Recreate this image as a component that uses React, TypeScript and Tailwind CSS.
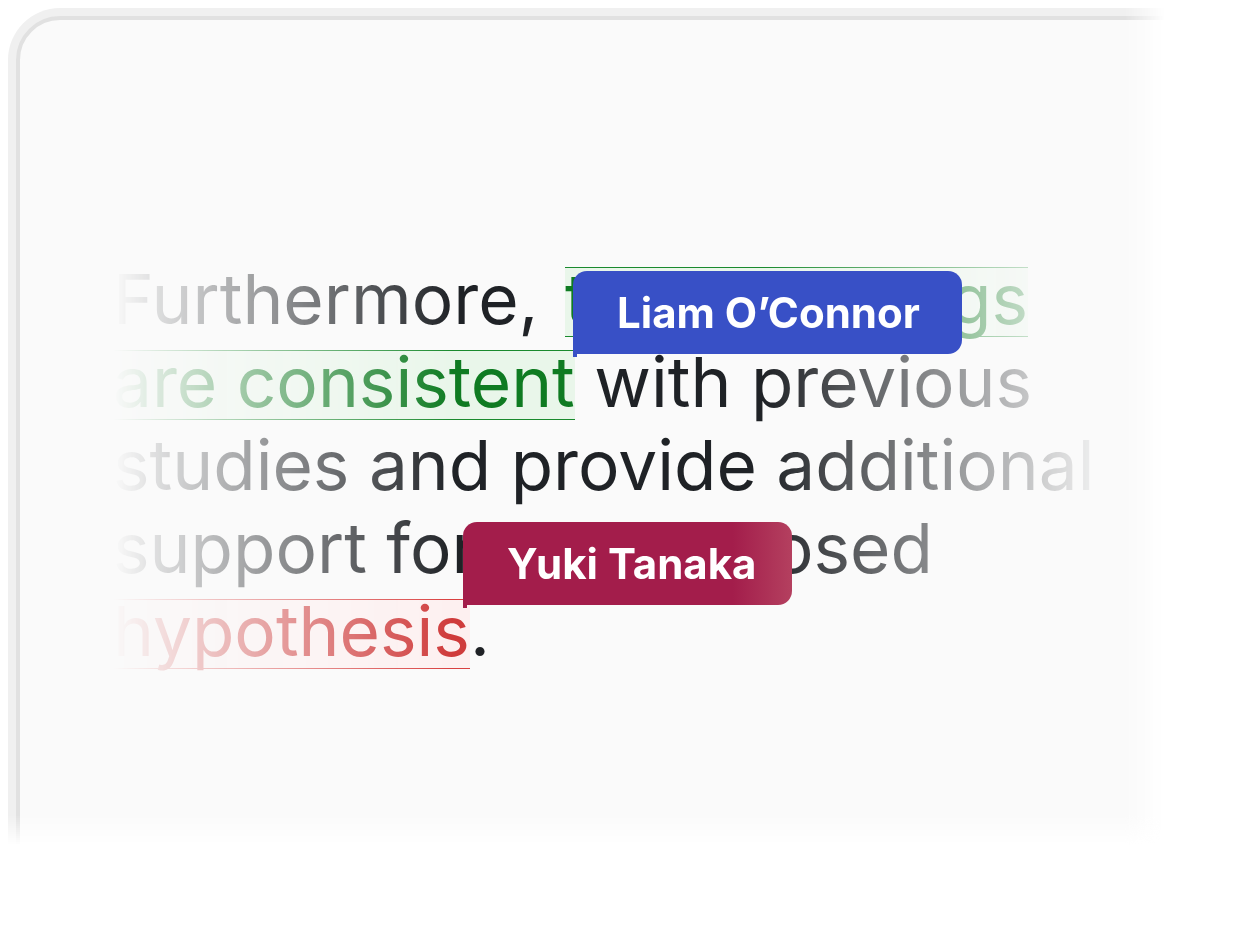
import React from "react";

function Hl({ kind, className = "", children }: { kind: "green" | "red"; className?: string; children: React.ReactNode }) {
  const box =
    kind === "green"
      ? "border-[#1a8a2e] bg-[#e9f6ea]"
      : "border-[#d94040] bg-[#fdf0f0]";
  const txt = kind === "green" ? "text-[#0f7b22]" : "text-[#cf3b3b]";
  return (
    <span className={`relative inline-block ${className}`}>
      <span className={`absolute left-0 right-0 top-[9px] h-[70px] border-y ${box}`} />
      <span className={`relative ${txt}`}>{children}</span>
    </span>
  );
}

export default function App() {
  return (
    <div className="relative w-[1248px] h-[928px] overflow-hidden bg-white pl-2 pt-2">
      <div className="[mask-image:linear-gradient(to_bottom,black_807px,transparent_837px)]">
        <div className="[mask-image:linear-gradient(to_right,black_1117px,transparent_1157px)]">
          <div className="w-[1400px] h-[1000px] rounded-[52px] bg-[#f0f0f0] p-2">
            <div className="relative h-full rounded-[44px] border-4 border-[#e1e1e1] bg-[#fafafa] pl-[93px] pt-[238px]">
              <div className="w-[1000px] text-[69.3px] leading-[83px] text-[#1f2226] font-['Inter',sans-serif] whitespace-nowrap [mask-image:linear-gradient(to_right,transparent_0px,black_340px,black_650px,transparent_1000px)]">
                <div>
                  Furthermore, <Hl kind="green" className="ml-[7px]">these findings</Hl>
                </div>
                <div>
                  <Hl kind="green">are consistent</Hl> with previous
                </div>
                <div>studies and provide additional</div>
                <div>support for the proposed</div>
                <div>
                  <Hl kind="red">hypothesis</Hl>.
                </div>
              </div>
              <div className="absolute left-[553px] top-[251px] flex h-[83px] w-[389px] items-center rounded-[14px] rounded-bl-none bg-[#3850c6] pl-[44px] text-[42px] font-bold text-white font-['Inter',sans-serif]">
                Liam O’Connor
                <div className="absolute left-0 top-full h-[3px] w-[4px] bg-[#3850c6]" />
              </div>
              <div className="absolute left-[443px] top-[502px] flex h-[83px] w-[329px] items-center rounded-[14px] rounded-bl-none bg-[linear-gradient(to_right,#a31d4b_82%,#b4405f)] pl-[44px] text-[42px] font-bold text-white font-['Inter',sans-serif]">
                Yuki Tanaka
                <div className="absolute left-0 top-full h-[3px] w-[4px] bg-[#a31d4b]" />
              </div>
            </div>
          </div>
        </div>
      </div>
    </div>
  );
}
